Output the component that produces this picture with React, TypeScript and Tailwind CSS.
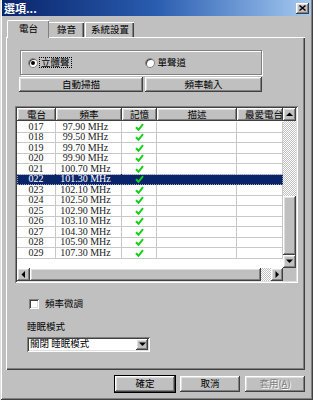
import React from "react";

const FONT = "font-['Noto_Sans_CJK_TC','Noto_Sans',sans-serif]";
const SERIF = "font-['Liberation_Serif','Noto_Sans_CJK_TC',serif]";

// classic win9x bevels
const RAISED =
  "shadow-[inset_-1px_-1px_0_#404040,inset_1px_1px_0_#ffffff,inset_-2px_-2px_0_#808080,inset_2px_2px_0_#dfdfdf]";
const SUNKEN =
  "shadow-[inset_1px_1px_0_#808080,inset_-1px_-1px_0_#ffffff,inset_2px_2px_0_#404040,inset_-2px_-2px_0_#dfdfdf]";
const DITHER =
  "bg-[repeating-conic-gradient(#c0c0c0_0%_25%,#ffffff_0%_50%)] bg-[length:2px_2px]";

const stations: [string, string][] = [
  ["017", "97.90"],
  ["018", "99.50"],
  ["019", "99.70"],
  ["020", "99.90"],
  ["021", "100.70"],
  ["022", "101.30"],
  ["023", "102.10"],
  ["024", "102.50"],
  ["025", "102.90"],
  ["026", "103.10"],
  ["027", "104.30"],
  ["028", "105.90"],
  ["029", "107.30"],
];

const SELECTED = "022";
const COLS = "grid-cols-[39px_66px_35px_80px_46px]";

function Check() {
  return (
    <svg width="9" height="8" viewBox="0 0 9 8">
      <path d="M1 4.2 3.5 6.8 8 1.2" fill="none" stroke="#16d016" strokeWidth="2" />
    </svg>
  );
}

function Arrow({ dir }: { dir: "up" | "down" | "left" | "right" }) {
  const pts = {
    up: "0,4 3.5,0.5 7,4",
    down: "0,0.5 7,0.5 3.5,4",
    left: "4,0 4,7 0.5,3.5",
    right: "0.5,0 0.5,7 4,3.5",
  }[dir];
  const vertical = dir === "up" || dir === "down";
  return (
    <svg width={vertical ? 7 : 5} height={vertical ? 5 : 7} viewBox={vertical ? "0 0 7 5" : "0 0 5 7"}>
      <polygon points={pts} fill="#000" />
    </svg>
  );
}

function Radio({ on }: { on?: boolean }) {
  return (
    <span className="w-[10px] h-[10px] rounded-full bg-white border border-[#808080] shadow-[inset_1px_1px_0_#404040] flex items-center justify-center">
      {on && <span className="w-[4px] h-[4px] rounded-full bg-black" />}
    </span>
  );
}

function HeaderCell({ label }: { label: string }) {
  return (
    <div className={`h-[13px] flex items-center justify-center bg-[#c0c0c0] overflow-hidden whitespace-nowrap ${RAISED}`}>
      {label}
    </div>
  );
}

function StationRow({ id, freq }: { id: string; freq: string }) {
  const sel = id === SELECTED;
  const cell = `flex items-center justify-center h-full border-r border-b ${
    sel ? "border-[#0a246a]" : "border-[#c8c8c8]"
  }`;
  return (
    <div
      className={`grid ${COLS} h-[10.5px] ${sel ? "bg-[#0a246a] text-white outline-1 outline-dotted outline-[#9aa0c0] -outline-offset-1" : "text-[#202020]"}`}
    >
      <div className={cell}>{id}</div>
      <div className={`${cell} pr-[6px]`}>{freq} MHz</div>
      <div className={cell}>
        <Check />
      </div>
      <div className={cell} />
      <div className={cell} />
    </div>
  );
}

function StationList() {
  return (
    <div className={`ml-[9px] mt-[14px] w-[283px] h-[177px] p-[2px] bg-white ${SUNKEN}`}>
      <div className="flex h-[160px]">
        <div className="w-[266px] flex flex-col overflow-hidden">
          <div className={`grid ${COLS} text-[9.5px] leading-none ${FONT}`}>
            <HeaderCell label="電台" />
            <HeaderCell label="頻率" />
            <HeaderCell label="記憶" />
            <HeaderCell label="描述" />
            <div className={`h-[13px] flex items-center pl-[8px] bg-[#c0c0c0] whitespace-nowrap overflow-hidden ${RAISED}`}>
              最愛電台
            </div>
          </div>
          <div className={`pt-[0.5px] text-[10px] leading-none ${SERIF}`}>
            {stations.map(([id, freq]) => (
              <StationRow key={id} id={id} freq={freq} />
            ))}
          </div>
        </div>
        {/* vertical scrollbar */}
        <div className="w-[13px] flex flex-col">
          <div className={`h-[13px] bg-[#c0c0c0] flex items-center justify-center ${RAISED}`}>
            <Arrow dir="up" />
          </div>
          <div className={`flex-1 ${DITHER}`} />
          <div className={`h-[59px] bg-[#c0c0c0] ${RAISED}`} />
          <div className={`h-[13px] bg-[#c0c0c0] flex items-center justify-center ${RAISED}`}>
            <Arrow dir="down" />
          </div>
        </div>
      </div>
      {/* horizontal scrollbar */}
      <div className="flex h-[13px]">
        <div className={`w-[13px] bg-[#c0c0c0] flex items-center justify-center ${RAISED}`}>
          <Arrow dir="left" />
        </div>
        <div className={`w-[231px] bg-[#c0c0c0] ${RAISED}`} />
        <div className={`flex-1 ${DITHER}`} />
        <div className={`w-[12px] bg-[#c0c0c0] flex items-center justify-center ${RAISED}`}>
          <Arrow dir="right" />
        </div>
        <div className="w-[13px] bg-[#c0c0c0]" />
      </div>
    </div>
  );
}

function PushButton({
  children,
  width,
  def,
  disabled,
}: {
  children: React.ReactNode;
  width: string;
  def?: boolean;
  disabled?: boolean;
}) {
  return (
    <div
      className={`${width} h-full flex items-center justify-center bg-[#c0c0c0] ${RAISED} ${
        def ? "outline-1 outline-black" : ""
      } ${disabled ? "text-[#808080] [text-shadow:1px_1px_0_#ffffff]" : "text-black"}`}
    >
      {children}
    </div>
  );
}

export default function App() {
  return (
    <div
      className={`w-[313px] h-[400px] bg-[#c0c0c0] px-[2px] pb-[3px] flex flex-col text-[9.5px] leading-none text-black ${FONT} shadow-[inset_1px_0_0_#dfdfdf,inset_-1px_-1px_0_#404040,inset_2px_0_0_#ffffff,inset_-2px_-2px_0_#808080]`}
    >
      {/* title bar */}
      <div className="h-[16px] flex items-center justify-between bg-linear-to-r from-[#0a246a] via-[#2a5db0] to-[#a6caf0] pl-[2px] pr-[2px]">
        <span className="text-white font-bold text-[11px]">選項...</span>
        <div className={`w-[13px] h-[11px] bg-[#c0c0c0] flex items-center justify-center ${RAISED}`}>
          <svg width="7" height="6" viewBox="0 0 7 6">
            <path d="M0.5 0.5 6.5 5.5 M6.5 0.5 0.5 5.5" stroke="#000" strokeWidth="1.4" />
          </svg>
        </div>
      </div>

      {/* tabs */}
      <div className="mt-[4px] ml-[5px] h-[17px] flex items-end">
        <div className="relative z-10 -mb-px h-[18px] w-[42px] bg-[#c0c0c0] border-t border-l border-white rounded-tl-[2px] shadow-[inset_-1px_0_0_#808080] flex items-center justify-center pb-[1px]">
          電台
        </div>
        <div className="h-[15px] w-[35px] border-t border-white shadow-[inset_-1px_0_0_#404040,inset_-2px_0_0_#808080] flex items-center justify-center">
          錄音
        </div>
        <div className="ml-[1px] h-[15px] w-[49px] border-t border-l border-white shadow-[inset_-1px_0_0_#404040,inset_-2px_0_0_#808080] flex items-center justify-center">
          系統設置
        </div>
      </div>

      {/* tab panel */}
      <div className="ml-[4px] w-[299px] h-[333px] flex flex-col shadow-[inset_1px_1px_0_#ffffff,inset_-1px_-1px_0_#404040,inset_-2px_-2px_0_#808080]">
        {/* channel group */}
        <div className="ml-[14px] mt-[13px] w-[242px] h-[25px] border border-[#808080] shadow-[inset_1px_1px_0_#ffffff,1px_1px_0_#ffffff] flex items-center">
          <div className="ml-[7px] flex items-center gap-[2px]">
            <Radio on />
            <span className="px-[1px] outline-1 outline-dotted outline-black">立體聲</span>
          </div>
          <div className="ml-[74px] flex items-center gap-[3px]">
            <Radio />
            <span>單聲道</span>
          </div>
        </div>

        <div className="ml-[13px] mt-[2px] h-[15px] flex gap-[2px]">
          <PushButton width="w-[124px]">自動掃描</PushButton>
          <PushButton width="w-[117px]">頻率輸入</PushButton>
        </div>

        <StationList />

        <div className="ml-[23px] mt-[16px] h-[10px] flex items-center gap-[6px]">
          <span className={`w-[10px] h-[10px] bg-white ${SUNKEN}`} />
          <span>頻率微調</span>
        </div>

        <div className="ml-[21px] mt-[13px]">睡眠模式</div>

        <div className={`ml-[21px] mt-[5px] w-[123px] h-[15px] bg-white p-[2px] flex ${SUNKEN}`}>
          <span className="flex-1 flex items-center pl-[1px]">關閉 睡眠模式</span>
          <span className={`w-[12px] bg-[#c0c0c0] flex items-center justify-center ${RAISED}`}>
            <Arrow dir="down" />
          </span>
        </div>
      </div>

      {/* dialog buttons */}
      <div className="ml-[4px] w-[299px] mt-[6px] h-[16px] flex justify-end gap-[5px]">
        <PushButton width="w-[60px]" def>
          確定
        </PushButton>
        <PushButton width="w-[60px]">取消</PushButton>
        <PushButton width="w-[60px]" disabled>
          <span>
            套用(<span className="underline">A</span>)
          </span>
        </PushButton>
      </div>
    </div>
  );
}
